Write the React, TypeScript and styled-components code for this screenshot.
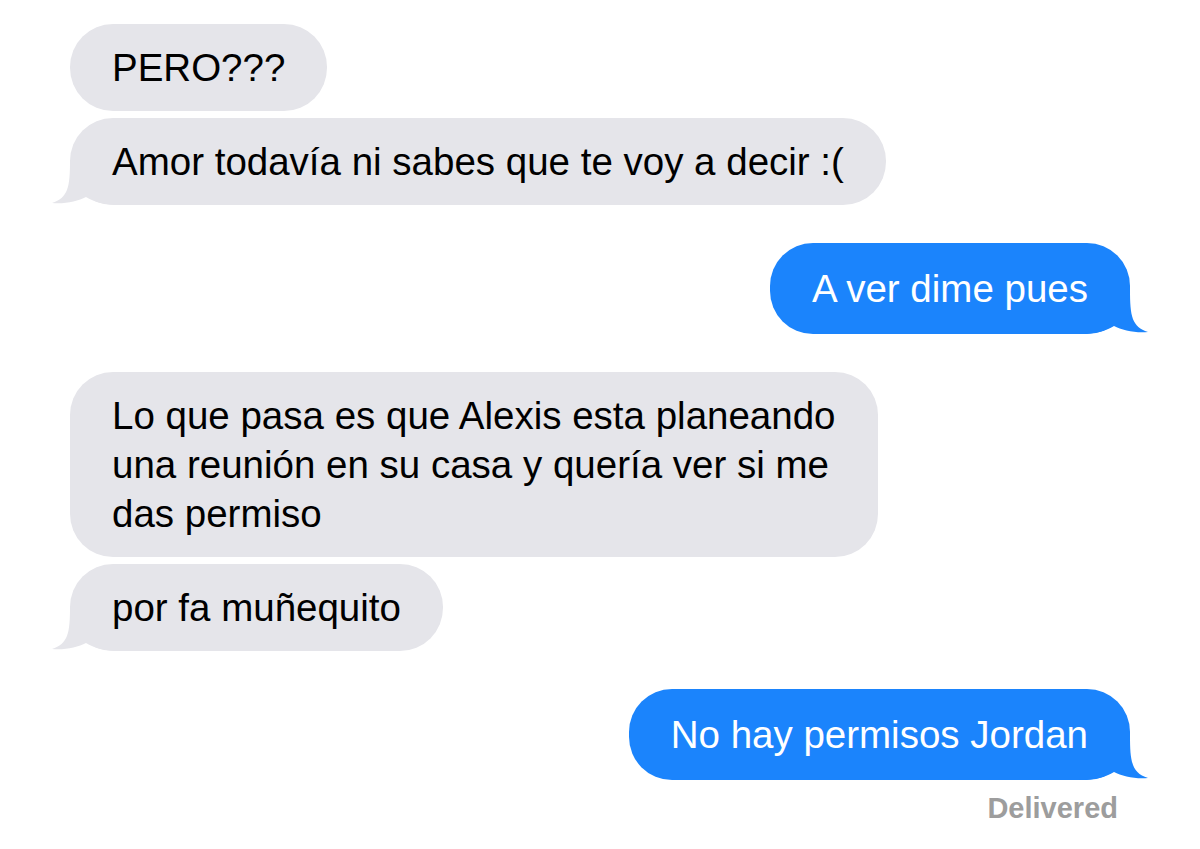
import styled, {createGlobalStyle} from 'styled-components';

const GRAY = '#e5e5ea';
const BLUE = '#1b84fc';

const GlobalStyle = createGlobalStyle`
    body {
        margin: 0;
        background: #ffffff;
        font-family: "Liberation Sans", Arial, sans-serif;
    }
`;

interface MessageType {
    lines: string[];
}

interface GroupType {
    mine: boolean;
    messages: MessageType[];
    status?: string;
}

const conversation: GroupType[] = [
    {
        mine: false,
        messages: [
            {lines: ['PERO???']},
            {lines: ['Amor todavía ni sabes que te voy a decir :(']},
        ],
    },
    {
        mine: true,
        messages: [{lines: ['A ver dime pues']}],
    },
    {
        mine: false,
        messages: [
            {
                lines: [
                    'Lo que pasa es que Alexis esta planeando',
                    'una reunión en su casa y quería ver si me',
                    'das permiso',
                ],
            },
            {lines: ['por fa muñequito']},
        ],
    },
    {
        mine: true,
        messages: [{lines: ['No hay permisos Jordan']}],
        status: 'Delivered',
    },
];

const Tail = ({mine}: {mine: boolean}) => (
    <TailSvg $mine={mine} width="70" height="44" viewBox="0 0 70 44">
        <path
            d="M18 0 C18 26 16 37 0 42 C12 43.5 26 40 34 36 C42 41 52 44 70 44 L70 0 Z"
            fill={mine ? BLUE : GRAY}
        />
    </TailSvg>
);

const App = () => {
    return (
        <>
            <GlobalStyle />
            <Thread>
                {conversation.map((group, gi) => (
                    <Group key={gi}>
                        {group.messages.map((msg, mi) => {
                            const last = mi === group.messages.length - 1;
                            return (
                                <Row key={mi} $mine={group.mine}>
                                    <Bubble $mine={group.mine}>
                                        {msg.lines.map((line, li) => (
                                            <Line key={li}>{line}</Line>
                                        ))}
                                        {last && <Tail mine={group.mine} />}
                                    </Bubble>
                                </Row>
                            );
                        })}
                        {group.status && <Status>{group.status}</Status>}
                    </Group>
                ))}
            </Thread>
        </>
    );
};

export default App;

const Thread = styled.div`
    display: flex;
    flex-direction: column;
    gap: 38px;
    padding: 24px 70px 0;
`;

const Group = styled.div`
    display: flex;
    flex-direction: column;
    gap: 7px;
`;

const Row = styled.div<{$mine: boolean}>`
    display: flex;
    justify-content: ${({$mine}) => ($mine ? 'flex-end' : 'flex-start')};
`;

const Bubble = styled.div<{$mine: boolean}>`
    position: relative;
    padding: ${({$mine}) => ($mine ? '21px 42px' : '19px 42px')};
    border-radius: 43px;
    background: ${({$mine}) => ($mine ? BLUE : GRAY)};
    color: ${({$mine}) => ($mine ? '#ffffff' : '#000000')};
    font-size: 38.5px;
    line-height: 49px;
    white-space: nowrap;
`;

const Line = styled.div`
    position: relative;
    z-index: 1;
`;

const TailSvg = styled.svg<{$mine: boolean}>`
    position: absolute;
    bottom: 0;
    ${({$mine}) => ($mine ? 'right: -18px; transform: scaleX(-1);' : 'left: -18px;')}
    display: block;
`;

const Status = styled.div`
    align-self: flex-end;
    margin-top: 4px;
    padding-right: 12px;
    color: #9d9d9d;
    font-size: 29px;
    font-weight: 600;
    line-height: 34px;
`;
